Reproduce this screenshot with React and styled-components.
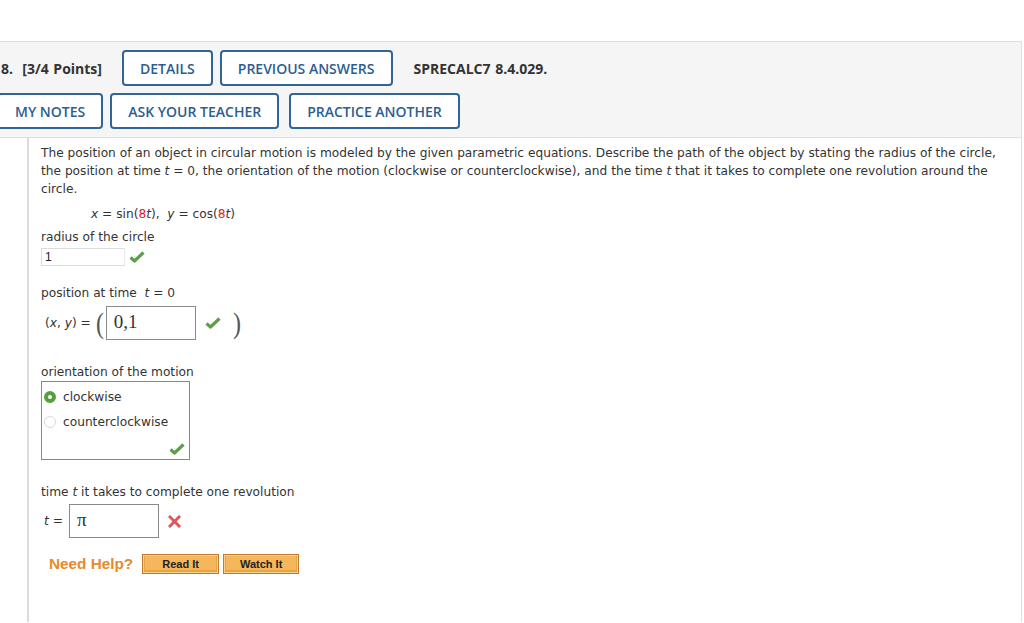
import styled, { createGlobalStyle } from 'styled-components';

const GlobalStyle = createGlobalStyle`
  body {
    margin: 0;
    background: #fff;
    font-family: "DejaVu Sans", Verdana, sans-serif;
  }
`;

const Page = styled.div`
  padding-top: 41px;
  width: 1022px;
`;

const Header = styled.div`
  background: #f5f5f5;
  border-top: 1px solid #dedede;
  border-right: 1px solid #dedede;
  border-bottom: 1px solid #dedede;
  height: 97px;
  padding-top: 8px;
  box-sizing: border-box;
  font-family: "Open Sans", "Liberation Sans", sans-serif;
`;

const HeaderRow = styled.div`
  display: flex;
  align-items: center;
  margin-left: ${(p) => p.$shift || 0}px;
  margin-bottom: 7px;
`;

const Points = styled.div`
  font-size: 14px;
  font-weight: 700;
  color: #333;
  padding-left: 1px;
  margin-right: ${(p) => p.$gap || 0}px;
  word-spacing: 1px;
`;

const OutlineButton = styled.div`
  box-sizing: border-box;
  height: 36px;
  display: flex;
  align-items: center;
  padding: 0 16px;
  border: 2px solid #2f6597;
  border-radius: 4px;
  background: #fff;
  color: #2b5e91;
  font-size: 14px;
  font-weight: 600;
  margin-right: ${(p) => p.$gap || 8}px;
`;

const Body = styled.div`
  border-left: 2px solid #dcdcdc;
  border-right: 1px solid #dedede;
  margin-left: 27px;
  padding: 6px 12px 0 12px;
  height: 484px;
  box-sizing: border-box;
  font-size: 12.2px;
  color: #333;
`;

const Paragraph = styled.p`
  margin: 0;
  line-height: 18px;
  white-space: nowrap;
`;

const Equation = styled.div`
  margin: 7px 0 0 50px;
  line-height: 18px;
`;

const Red = styled.span`
  color: #d4241c;
`;

const Label = styled.div`
  margin-top: ${(p) => p.$top || 0}px;
  line-height: 18px;
`;

const Row = styled.div`
  display: flex;
  align-items: center;
  margin-top: ${(p) => p.$top || 0}px;
  margin-left: ${(p) => p.$left || 0}px;
`;

const SmallInput = styled.div`
  box-sizing: border-box;
  width: 84px;
  height: 18px;
  border: 1px solid #dcdcdc;
  border-right-color: #e8e8e8;
  font-family: "Liberation Sans", Arial, sans-serif;
  font-size: 12px;
  line-height: 16px;
  padding-left: 3px;
  color: #222;
`;

const BigInput = styled.div`
  box-sizing: border-box;
  width: ${(p) => p.$w}px;
  height: 34px;
  border: 1px solid #8a8a8a;
  font-family: "Liberation Serif", "Times New Roman", serif;
  font-size: 19px;
  line-height: 30px;
  padding-left: 7px;
  color: #333;
`;

const MathText = styled.span`
  margin-right: ${(p) => p.$gap || 0}px;
  color: #333;
`;

const Paren = styled.span`
  font-family: "Liberation Serif", "Times New Roman", serif;
  font-size: 30px;
  color: #555;
  line-height: 30px;
  margin: 0 ${(p) => p.$right || 0}px 0 ${(p) => p.$left || 0}px;
  transform: scaleX(0.8);
`;

const IconSlot = styled.span`
  display: inline-flex;
  margin-left: ${(p) => p.$left || 0}px;
`;

const RadioBox = styled.div`
  box-sizing: border-box;
  width: 149px;
  height: 79px;
  border: 1px solid #66a83a;
  padding: 2px 0 0 2px;
  position: relative;
`;

const RadioRow = styled.div`
  display: flex;
  align-items: center;
  height: 25px;
`;

const RadioDot = styled.span`
  box-sizing: border-box;
  width: 12px;
  height: 12px;
  border-radius: 50%;
  margin-right: 7px;
  border: ${(p) => (p.$checked ? '4px solid #55a03c' : '1px solid #d8d8d8')};
  background: #fff;
`;

const BoxCheck = styled.span`
  position: absolute;
  right: 4px;
  bottom: 4px;
  display: inline-flex;
`;

const HelpRow = styled.div`
  display: flex;
  align-items: center;
  margin: 16px 0 0 8px;
`;

const NeedHelp = styled.span`
  font-family: "Liberation Sans", Arial, sans-serif;
  font-weight: 700;
  font-size: 15.3px;
  color: #e8892c;
  margin-right: 9px;
`;

const HelpButton = styled.div`
  box-sizing: border-box;
  width: ${(p) => p.$w}px;
  height: 20px;
  margin-right: 4px;
  border: 1px solid #c47a2c;
  background: #f4b75b;
  box-shadow: inset 0 0 0 1px #f9d08a, inset 0 -1px 0 2px #e9a44a;
  display: flex;
  align-items: center;
  justify-content: center;
  font-family: "Liberation Sans", Arial, sans-serif;
  font-weight: 700;
  font-size: 11px;
  color: #222;
`;

const Check = () => (
  <svg width="16" height="12" viewBox="0 0 16 12">
    <path d="M1.5 6.5 L5.5 10 L14.5 1.5" fill="none" stroke="#5ea04a" strokeWidth="3.2" strokeLinejoin="round" />
  </svg>
);

const Cross = () => (
  <svg width="13" height="13" viewBox="0 0 13 13">
    <path d="M2 2 L11 11 M11 2 L2 11" stroke="#e0575a" strokeWidth="3" strokeLinecap="square" />
  </svg>
);

function App() {
  return (
    <Page>
      <GlobalStyle />
      <Header>
        <HeaderRow>
          <Points $gap={20}>8.&nbsp; [3/4 Points]</Points>
          <OutlineButton $gap={7}>DETAILS</OutlineButton>
          <OutlineButton $gap={20}>PREVIOUS ANSWERS</OutlineButton>
          <Points>SPRECALC7 8.4.029.</Points>
        </HeaderRow>
        <HeaderRow $shift={-3}>
          <OutlineButton $gap={7}>MY NOTES</OutlineButton>
          <OutlineButton $gap={10}>ASK YOUR TEACHER</OutlineButton>
          <OutlineButton>PRACTICE ANOTHER</OutlineButton>
        </HeaderRow>
      </Header>

      <Body>
        <Paragraph>
          The position of an object in circular motion is modeled by the given parametric equations. Describe the path of the
          object by stating the radius of the circle,
          <br />
          the position at time <i>t</i> = 0, the orientation of the motion (clockwise or counterclockwise), and the time <i>t</i> that
          it takes to complete one revolution around the
          <br />
          circle.
        </Paragraph>

        <Equation>
          <i>x</i> = sin(<Red>8</Red><i>t</i>),&nbsp; <i>y</i> = cos(<Red>8</Red><i>t</i>)
        </Equation>

        <Label $top={5}>radius of the circle</Label>
        <Row $top={2}>
          <SmallInput>1</SmallInput>
          <IconSlot $left={4}><Check /></IconSlot>
        </Row>

        <Label $top={18}>position at time&nbsp; <i>t</i> = 0</Label>
        <Row $top={4} $left={4}>
          <MathText $gap={4}>(<i>x</i>, <i>y</i>) =</MathText>
          <Paren $right={1}>(</Paren>
          <BigInput $w={90}>0,1</BigInput>
          <IconSlot $left={9}><Check /></IconSlot>
          <Paren $left={11}>)</Paren>
        </Row>

        <Label $top={23}>orientation of the motion</Label>
        <RadioBox>
          <RadioRow>
            <RadioDot $checked />
            clockwise
          </RadioRow>
          <RadioRow>
            <RadioDot />
            counterclockwise
          </RadioRow>
          <BoxCheck><Check /></BoxCheck>
        </RadioBox>

        <Label $top={23}>time <i>t</i> it takes to complete one revolution</Label>
        <Row $top={3} $left={3}>
          <MathText $gap={6}><i>t</i> =</MathText>
          <BigInput $w={90}>π</BigInput>
          <IconSlot $left={9}><Cross /></IconSlot>
        </Row>

        <HelpRow>
          <NeedHelp>Need Help?</NeedHelp>
          <HelpButton $w={77}>Read It</HelpButton>
          <HelpButton $w={76}>Watch It</HelpButton>
        </HelpRow>
      </Body>
    </Page>
  );
}

export default App;
